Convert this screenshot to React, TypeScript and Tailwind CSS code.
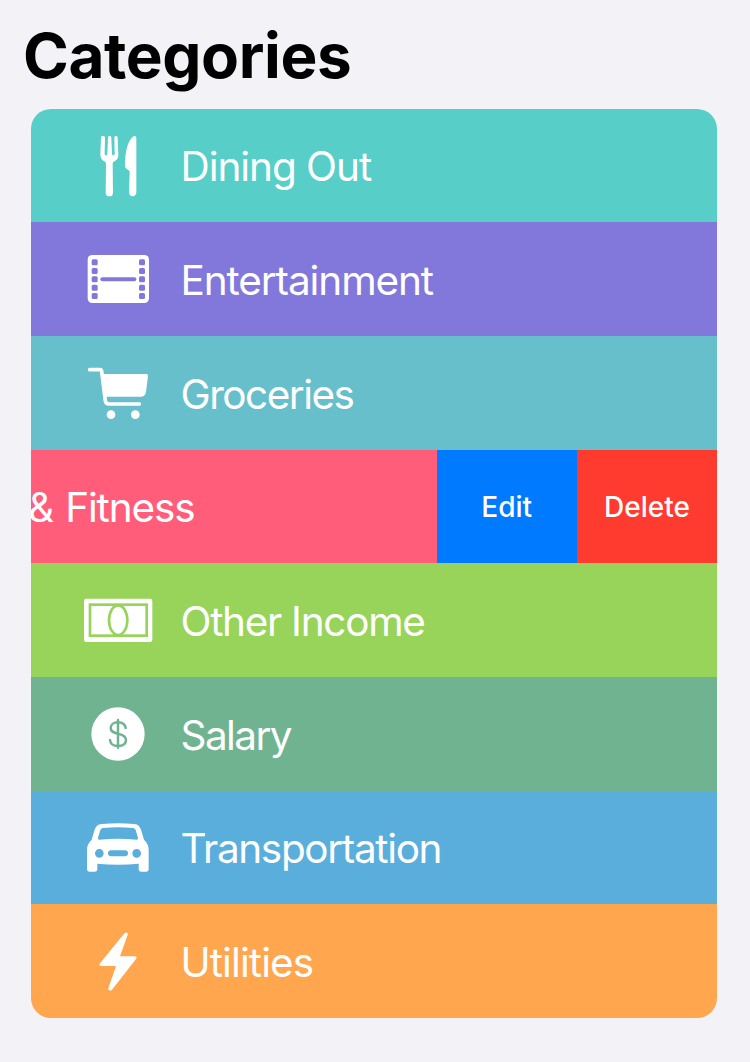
import type { ReactNode } from "react";

type Category = {
  name: string;
  color: string;
  tracking: string;
  icon: ReactNode;
};

const UtensilsIcon = () => (
  <g transform="translate(0 16)">
    <path d="M98 47c-3 0-5 2-5 5l-2 51c0 10 5 17 14 21 2 1 3 3 3 5l-1 88c0 7 4 11 11 11s11-4 11-11l-1-88c0-2 1-4 3-5 9-4 15-11 14-21l-2-51c0-3-2-5-5-5s-5 2-5 5l1 49c0 5-8 5-8 0l-2-49c0-3-2-5-5-5s-5 2-5 5l-2 49c0 5-8 5-8 0l1-49c0-3-2-5-5-5z" />
    <path d="M192 47c3-1 7 1 7 6v163c0 7-4 12-11 12s-11-5-11-12l2-60c0-3-1-4-3-6-9-5-12-9-11-18 0-40 10-76 27-85z" />
  </g>
);

const FilmIcon = () => (
  <g transform="translate(0 33)">
    <rect x="53" y="45" width="184" height="144" rx="14" />
    <g className="fill-[#8278dc]">
      {[58, 84, 109, 134, 159].map((y) => (
        <g key={y}>
          <rect x="65" y={y} width="18" height="18" rx="4.5" />
          <rect x="207" y={y} width="18" height="18" rx="4.5" />
        </g>
      ))}
      <rect x="91" y="112" width="108" height="12" rx="6" />
    </g>
  </g>
);

const CartIcon = () => (
  <g transform="translate(0 21)">
    <path
      d="M59 59h31q4 0 5 5l11 88q1 10 11 10h91"
      className="fill-none stroke-white stroke-[11]"
      strokeLinecap="round"
      strokeLinejoin="round"
    />
    <path d="M97 72h132q6 0 5 7l-6 46q-2 15-16 15H107z" />
    <circle cx="123" cy="194" r="13" />
    <circle cx="196" cy="194" r="13" />
  </g>
);

const BanknoteIcon = () => (
  <g transform="translate(0 45)">
    <rect x="42" y="41" width="205" height="130" rx="7" />
    <g className="fill-none stroke-[#98d35a] stroke-[8]">
      <rect x="60" y="59" width="170" height="93" />
      <ellipse cx="144.5" cy="105.5" rx="27.5" ry="44.5" />
    </g>
  </g>
);

const DollarIcon = () => (
  <g transform="translate(0 33)">
    <circle cx="144" cy="117" r="80" />
    <path
      d="M144 75v83M167 99c-2-11-11-17-23-17-13 0-22 7-22 17 0 11 9 14 22 17 15 3 24 8 24 19 0 12-10 18-24 18s-23-7-24-18"
      className="fill-none stroke-[#6fb391] stroke-[7.5]"
      strokeLinecap="round"
    />
  </g>
);

const CarIcon = () => (
  <g transform="translate(0 39)">
    <path
      fillRule="evenodd"
      d="M96 42q48-5 96 0c13 1 18 8 22 20l8 27c9 9 14 17 14 30v59q0 7-7 7h-16q-7 0-7-7v-17q-62 6-124 0v17q0 7-7 7H58q-7 0-7-7v-59c0-13 5-21 14-30l8-27c4-12 9-19 23-20zM98 54q-5 1-7 6l-7 24q-1 5 4 5 56-5 112 0 5 0 4-5l-7-24q-2-5-7-6-46-4-92 0zM88 117a13 13 0 1 0 0 26 13 13 0 1 0 0-26zM200 117a13 13 0 1 0 0 26 13 13 0 1 0 0-26zM123 121a9 9 0 0 0 0 18h42a9 9 0 0 0 0-18z"
    />
  </g>
);

const BoltIcon = () => (
  <g transform="translate(0 26)">
    <path d="M164 40c4-4 11-1 9 5l-23 65h45c5 0 6 4 3 8l-72 92c-4 5-13 2-11-4l23-67H93c-5 0-6-4-3-8z" />
  </g>
);

const before: Category[] = [
  { name: "Dining Out", color: "bg-[#58cec8]", tracking: "tracking-[-1.05px]", icon: <UtensilsIcon /> },
  { name: "Entertainment", color: "bg-[#8278dc]", tracking: "tracking-[-1.1px]", icon: <FilmIcon /> },
  { name: "Groceries", color: "bg-[#66bfcb]", tracking: "tracking-[-1.5px]", icon: <CartIcon /> },
];

const after: Category[] = [
  { name: "Other Income", color: "bg-[#98d35a]", tracking: "tracking-[-1.3px]", icon: <BanknoteIcon /> },
  { name: "Salary", color: "bg-[#6fb391]", tracking: "tracking-[-1.6px]", icon: <DollarIcon /> },
  { name: "Transportation", color: "bg-[#59aedc]", tracking: "tracking-[-1.35px]", icon: <CarIcon /> },
  { name: "Utilities", color: "bg-[#ffa64f]", tracking: "tracking-[-0.9px]", icon: <BoltIcon /> },
];

function CategoryRow({ name, color, tracking, icon }: Category) {
  return (
    <li className={`flex items-center pl-[39px] ${color}`}>
      <svg viewBox="0 0 300 300" className="size-[100px] shrink-0 fill-white" aria-hidden="true">
        {icon}
      </svg>
      <span className={`pt-[4px] pl-[10.5px] text-[40.5px] leading-none whitespace-nowrap ${tracking}`}>{name}</span>
    </li>
  );
}

function SwipedRow() {
  return (
    <li className="flex">
      <div className="flex flex-1 items-center justify-start overflow-hidden bg-[#ff5d7a]">
        <span className="-ml-[3px] pt-[4px] text-[40.5px] leading-none tracking-[-1.15px] whitespace-nowrap [word-spacing:2px]">
          &amp; Fitness
        </span>
      </div>
      <button className="w-[140.5px] bg-[#007aff] pt-[2px] text-[28px] font-medium">Edit</button>
      <button className="w-[140px] bg-[#ff3b2f] pt-[2px] text-[28px] font-medium">Delete</button>
    </li>
  );
}

export default function App() {
  return (
    <main className="h-[1062px] w-[750px] overflow-hidden bg-[#f2f2f7] pt-[22px] pr-[33px] pl-[31px] font-['Inter',sans-serif]">
      <h1 className="-ml-[8px] h-[86.6px] text-[62px] leading-[67px] font-bold tracking-[-0.4px] text-black">
        Categories
      </h1>
      <ul className="grid h-[909.4px] grid-rows-8 overflow-hidden rounded-[20px] text-white">
        {before.map((c) => (
          <CategoryRow key={c.name} {...c} />
        ))}
        <SwipedRow />
        {after.map((c) => (
          <CategoryRow key={c.name} {...c} />
        ))}
      </ul>
    </main>
  );
}
